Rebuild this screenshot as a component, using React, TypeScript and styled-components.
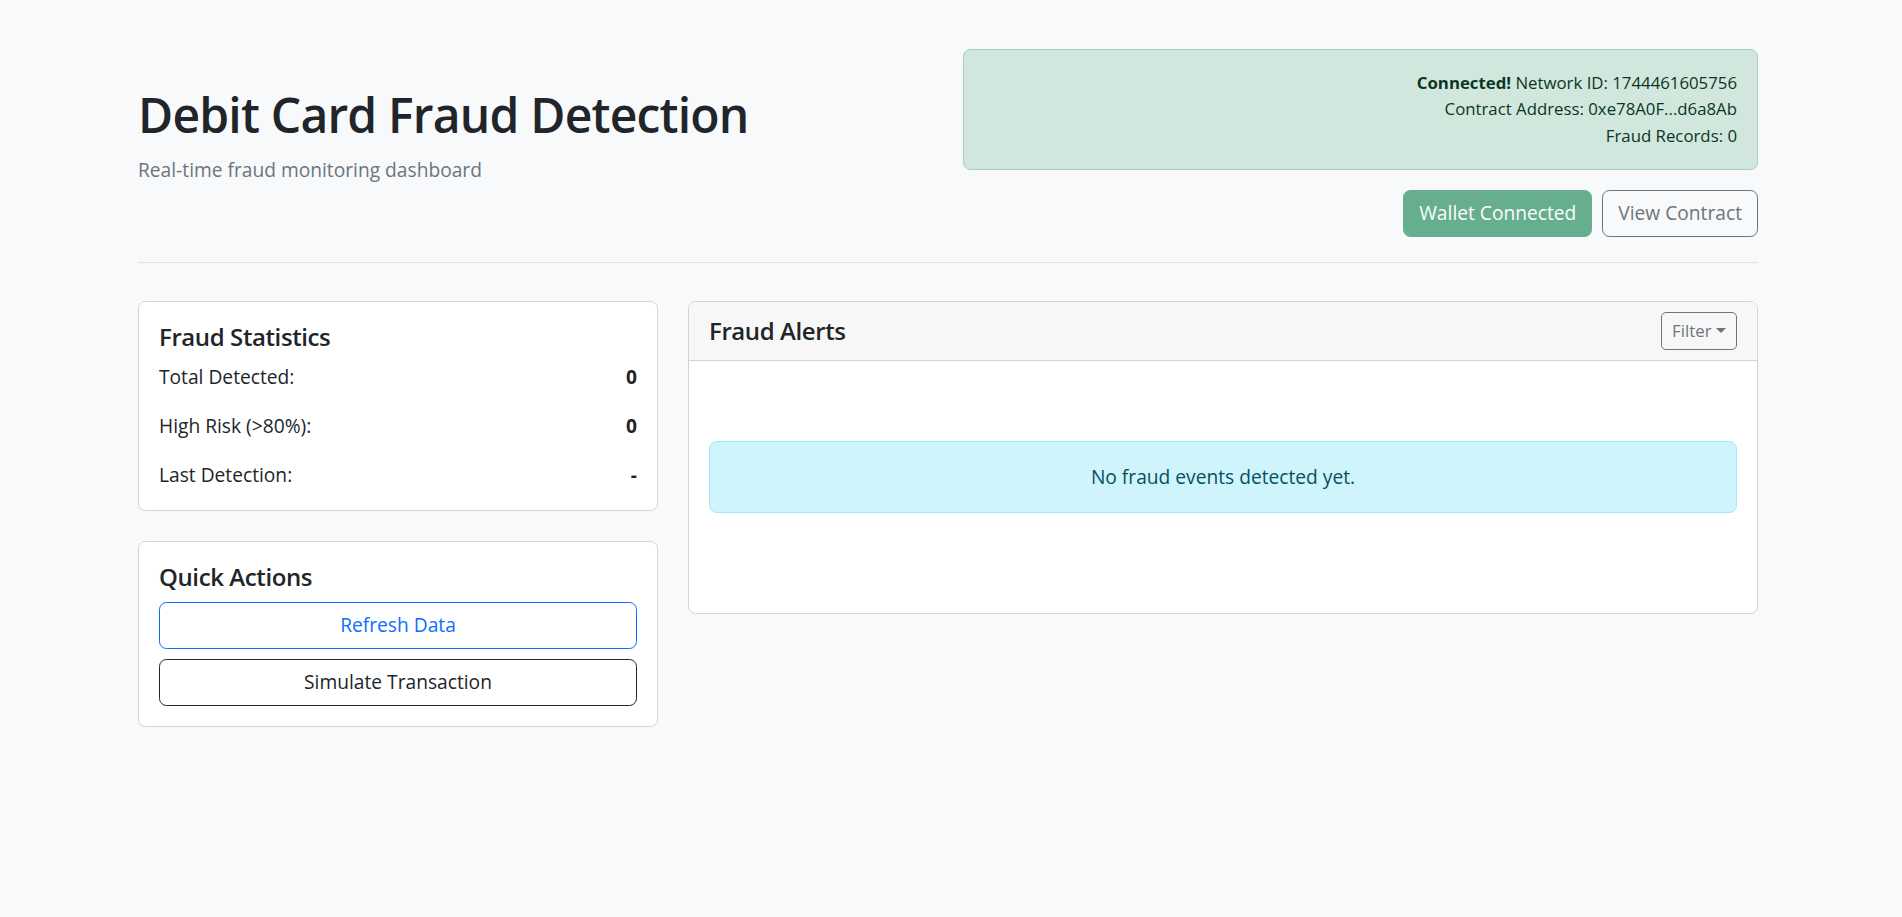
import styled, { createGlobalStyle } from 'styled-components';

const GlobalStyle = createGlobalStyle`
  * {
    box-sizing: border-box;
  }
  body {
    margin: 0;
    background: #f8f9fa;
    color: #212529;
    font-family: "Open Sans", "Noto Sans", sans-serif;
    font-size: 19.2px;
    line-height: 30px;
  }
`;

const Page = styled.div`
  padding: 49px 144px 40px 138px;
`;

const Header = styled.header`
  display: grid;
  grid-template-columns: 1fr 1fr;
  column-gap: 30px;
  align-items: center;
`;

const TitleBlock = styled.div`
  padding-top: 4px;
`;

const Title = styled.h1`
  margin: 0 0 10px;
  font-size: 48px;
  font-weight: 600;
  letter-spacing: -0.8px;
  line-height: 60px;
`;

const Subtitle = styled.p`
  margin: 0 0 20px;
  color: #6c757d;
`;

const StatusBlock = styled.div`
  text-align: right;
`;

const Alert = styled.div<{ variant: 'success' | 'info' }>`
  padding: 20px;
  border-radius: 7.5px;
  border: 1px solid ${(p) => (p.variant === 'success' ? '#a3cfbb' : '#9eeaf9')};
  background: ${(p) => (p.variant === 'success' ? '#d1e7dd' : '#cff4fc')};
  color: ${(p) => (p.variant === 'success' ? '#0a3622' : '#055160')};
  margin-bottom: 20px;
`;

const ConnectionInfo = styled(Alert)`
  font-size: 16.8px;
  line-height: 26.25px;
`;

const ButtonRow = styled.div`
  display: flex;
  justify-content: flex-end;
  gap: 10px;
`;

const Button = styled.button<{ tone: string; filled?: boolean; small?: boolean }>`
  font-family: inherit;
  font-size: ${(p) => (p.small ? '16.8px' : '19.2px')};
  line-height: ${(p) => (p.small ? '26.25px' : '30px')};
  padding: ${(p) => (p.small ? '5px 10px' : '7.5px 15px')};
  border-radius: ${(p) => (p.small ? '5px' : '7.5px')};
  border: 1px solid ${(p) => p.tone};
  background: ${(p) => (p.filled ? p.tone : 'transparent')};
  color: ${(p) => (p.filled ? '#fff' : p.tone)};
  opacity: ${(p) => (p.filled ? 0.65 : 1)};
  cursor: pointer;
  display: inline-flex;
  align-items: center;
  justify-content: center;
`;

const Caret = styled.span`
  display: inline-block;
  margin-left: 4.5px;
  border-top: 5.25px solid currentColor;
  border-left: 5.25px solid transparent;
  border-right: 5.25px solid transparent;
`;

const Divider = styled.hr`
  margin: 25px 0 38px;
  border: 0;
  border-top: 1px solid #dfe0e1;
`;

const Content = styled.main`
  display: grid;
  grid-template-columns: 520px 1fr;
  column-gap: 30px;
  align-items: start;
`;

const SideColumn = styled.div`
  display: flex;
  flex-direction: column;
  gap: 30px;
`;

const Card = styled.section`
  background: #fff;
  border: 1px solid #d3d4d5;
  border-radius: 7.5px;
  overflow: hidden;
`;

const CardBody = styled.div`
  padding: 20px;
`;

const CardHeader = styled.div`
  display: flex;
  justify-content: space-between;
  align-items: center;
  padding: 10px 20px;
  background: #f7f7f7;
  border-bottom: 1px solid #d3d4d5;
`;

const CardTitle = styled.h5<{ flush?: boolean }>`
  margin: 0 0 ${(p) => (p.flush ? '0' : '10px')};
  font-size: 24px;
  font-weight: 600;
  letter-spacing: -0.4px;
  line-height: 30px;
`;

const StatRow = styled.div`
  display: flex;
  justify-content: space-between;
  margin-bottom: 19px;

  &:last-child {
    margin-bottom: 0;
  }
`;

const StatValue = styled.strong`
  font-weight: 700;
`;

const ActionList = styled.div`
  display: grid;
  gap: 10px;
`;

const EmptyState = styled.div`
  padding: 60px 0;
  text-align: center;
`;

const stats = [
  { label: 'Total Detected:', value: '0' },
  { label: 'High Risk (>80%):', value: '0' },
  { label: 'Last Detection:', value: '-' },
];

const App = () => {
  return (
    <>
      <GlobalStyle />
      <Page>
        <Header>
          <TitleBlock>
            <Title>Debit Card Fraud Detection</Title>
            <Subtitle>Real-time fraud monitoring dashboard</Subtitle>
          </TitleBlock>
          <StatusBlock>
            <ConnectionInfo variant="success">
              <div>
                <strong>Connected!</strong> Network ID: 1744461605756
              </div>
              <div>Contract Address: 0xe78A0F...d6a8Ab</div>
              <div>Fraud Records: 0</div>
            </ConnectionInfo>
            <ButtonRow>
              <Button tone="#198754" filled>
                Wallet Connected
              </Button>
              <Button tone="#6c757d">View Contract</Button>
            </ButtonRow>
          </StatusBlock>
        </Header>

        <Divider />

        <Content>
          <SideColumn>
            <Card>
              <CardBody>
                <CardTitle>Fraud Statistics</CardTitle>
                {stats.map((s) => (
                  <StatRow key={s.label}>
                    <span>{s.label}</span>
                    <StatValue>{s.value}</StatValue>
                  </StatRow>
                ))}
              </CardBody>
            </Card>
            <Card>
              <CardBody>
                <CardTitle>Quick Actions</CardTitle>
                <ActionList>
                  <Button tone="#0d6efd">Refresh Data</Button>
                  <Button tone="#212529">Simulate Transaction</Button>
                </ActionList>
              </CardBody>
            </Card>
          </SideColumn>

          <Card>
            <CardHeader>
              <CardTitle flush>Fraud Alerts</CardTitle>
              <Button tone="#6c757d" small>
                Filter
                <Caret />
              </Button>
            </CardHeader>
            <CardBody>
              <EmptyState>
                <Alert variant="info">No fraud events detected yet.</Alert>
              </EmptyState>
            </CardBody>
          </Card>
        </Content>
      </Page>
    </>
  );
};

export default App;
